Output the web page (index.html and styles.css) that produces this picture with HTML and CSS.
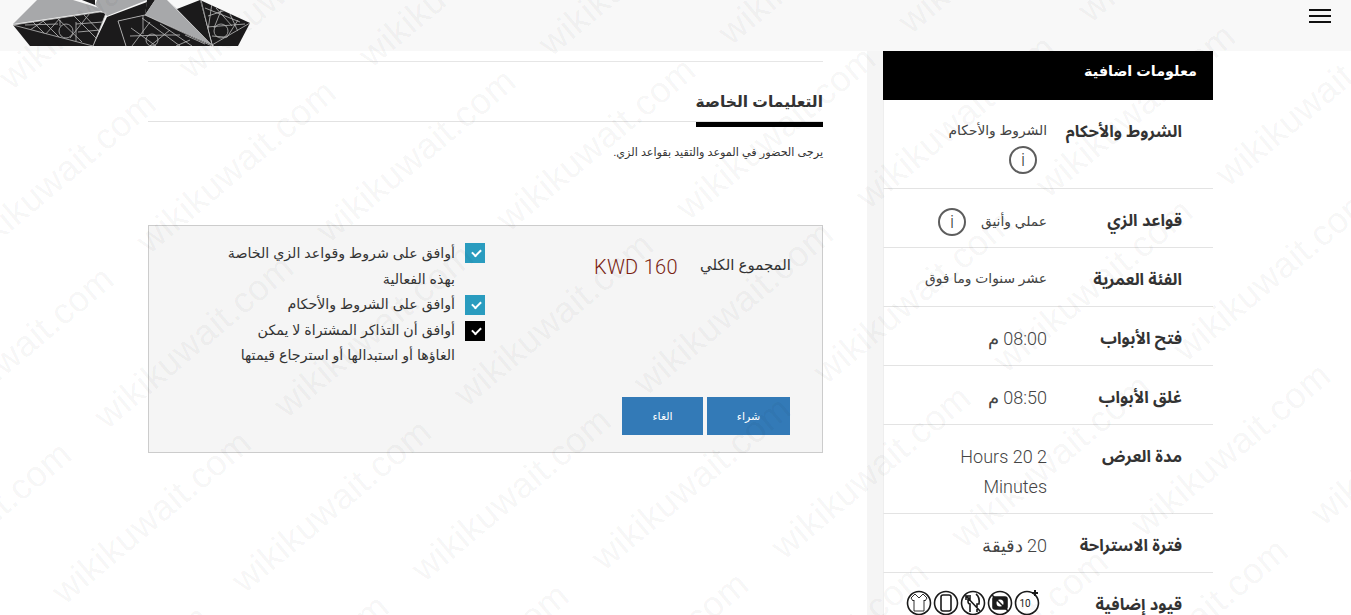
FILE: index.html
```html
<!DOCTYPE html>
<html lang="ar" dir="rtl">
<head>
<meta charset="utf-8">
<title>التعليمات الخاصة</title>
<link rel="stylesheet" href="styles.css">
</head>
<body>
<header class="top">
  <button class="burger" aria-label="menu"><span></span><span></span><span></span></button>
  <svg class="logo" width="252" height="47" viewBox="0 0 252 47">
    <defs>
      <clipPath id="patA"><polygon points="13,25 100,12 106,13 93,46"/></clipPath>
      <clipPath id="patB"><polygon points="118,21 145,15 212,46 126,46"/></clipPath>
      <clipPath id="patC"><polygon points="201,0 250,23 213,46"/></clipPath>
    </defs>
    <g fill="#1b1a1b">
      <polygon points="13,25 100,12 106,13 93,46 30,46"/>
      <polygon points="93,46 107,17 147,2 145,15 118,21 126,46"/>
      <polygon points="118,21 145,15 212,45 212,46 126,46"/>
      <polygon points="177,9 200,0 212,45 170,2"/>
      <polygon points="200,0 250,23 238,46 213,46"/>
      <polygon points="82,0 95,0 95,5"/>
      <polygon points="147,0 155,0 145,15"/>
    </g>
    <polygon points="13,24 37,0 73,0 106,10" fill="#a7a8aa"/>
    <polygon points="95,5 97,0 147,0 107,16" fill="#a7a8aa"/>
    <polygon points="145,15 155,0 167,0 212,45" fill="#a7a8aa"/>
    <g class="lines">
      <path d="M13,25 100,12 106,13 93,46 13,25"/>
      <path d="M118,21 145,15 212,46M118,21 126,46"/>
      <path d="M201,0 212,45 250,23M212,45 214,46"/>
      <g clip-path="url(#patA)">
        <circle cx="66" cy="31" r="7"/>
        <path d="M30,19 45,34M40,18 60,38M55,16 82,42M72,14 96,38M90,13 70,38M62,16 44,36M48,18 30,30M84,15 100,32M25,25 58,24M76,24 103,22M78,32 100,30M60,20 60,26M76,22 76,41"/>
      </g>
      <g clip-path="url(#patB)">
        <circle cx="152" cy="40" r="6"/>
        <path d="M131,28 156,46M142,18 180,46M160,24 192,46M150,22 132,46M170,30 150,46M190,40 176,46M143,16 143,34M130,36 165,35M165,35 180,35M185,35 205,44"/>
      </g>
      <g clip-path="url(#patC)">
        <circle cx="221" cy="31" r="7"/>
        <path d="M205,8 240,22M212,3 208,30M222,8 214,28M230,14 240,36M207,27 245,24M208,16 232,8M216,8 232,26M238,20 224,42M212,36 236,38"/>
      </g>
    </g>
  </svg>
</header>

<div class="page">
  <aside class="side">
    <h3 class="side-title">معلومات اضافية</h3>
    <dl class="facts">
      <div class="fact fact-terms">
        <dt>الشروط والأحكام</dt>
        <dd class="small">الشروط والأحكام<br><i class="info info-block">i</i></dd>
      </div>
      <div class="fact">
        <dt>قواعد الزي</dt>
        <dd class="small">عملي وأنيق <i class="info info-inline">i</i></dd>
      </div>
      <div class="fact"><dt>الفئة العمرية</dt><dd class="small">عشر سنوات وما فوق</dd></div>
      <div class="fact"><dt>فتح الأبواب</dt><dd>08:00 م</dd></div>
      <div class="fact"><dt>غلق الأبواب</dt><dd>08:50 م</dd></div>
      <div class="fact fact-tall"><dt>مدة العرض</dt><dd>2 Hours 20 Minutes</dd></div>
      <div class="fact"><dt>فترة الاستراحة</dt><dd>20 دقيقة</dd></div>
      <div class="fact fact-last">
        <dt>قيود إضافية</dt>
        <dd class="rules">
          <svg class="rule" viewBox="0 0 26 26"><circle cx="13" cy="13" r="11.5"/><text x="11" y="17" text-anchor="middle" class="ten">10</text><path class="plus" d="M21 0v6M18 3h6"/></svg>
          <svg class="rule" viewBox="0 0 26 26"><circle cx="13" cy="13" r="11.5"/><rect class="solid" x="6" y="7" width="14" height="12" rx="2"/><circle class="hole" cx="13" cy="13" r="3.5"/><path d="M5 5 21 21"/></svg>
          <svg class="rule" viewBox="0 0 26 26"><circle cx="13" cy="13" r="11.5"/><path d="M8 5v6q0 3 2 3v8M6 5v5M10 5v5M16 4q4 3 3 10h-2v8M6 6 20 21"/></svg>
          <svg class="rule" viewBox="0 0 26 26"><circle cx="13" cy="13" r="11.5"/><rect x="8" y="5" width="10" height="16" rx="2"/></svg>
          <svg class="rule" viewBox="0 0 26 26"><circle cx="13" cy="13" r="11.5"/><path class="thin" d="M9 4 5 8 7 11 8 10V21H18V10L19 11 21 8 17 4 13 8Z"/></svg>
        </dd>
      </div>
    </dl>
  </aside>

  <main class="main">
    <div class="rule-top"></div>
    <div class="tab-line"><h3 class="tab">التعليمات الخاصة</h3></div>
    <p class="note">يرجى الحضور في الموعد والتقيد بقواعد الزي.</p>

    <section class="box">
      <div class="box-body">
        <div class="total">
          <span class="total-label">المجموع الكلي</span>
          <span class="total-price" dir="ltr">KWD 160</span>
        </div>
        <ul class="checks">
          <li><span class="tick"></span><span class="check-text">أوافق على شروط وقواعد الزي الخاصة بهذه الفعالية</span></li>
          <li><span class="tick"></span><span class="check-text">أوافق على الشروط والأحكام</span></li>
          <li><span class="tick tick-dark"></span><span class="check-text">أوافق أن التذاكر المشتراة لا يمكن الغاؤها أو استبدالها أو استرجاع قيمتها</span></li>
        </ul>
      </div>
      <div class="actions">
        <button class="btn btn-buy">شراء</button>
        <button class="btn btn-cancel">الغاء</button>
      </div>
    </section>
  </main>
</div>

<div class="marks" aria-hidden="true">
  <div class="marks-inner">
    <div class="mark-row"><span>wikikuwait.com</span><span>wikikuwait.com</span><span>wikikuwait.com</span><span>wikikuwait.com</span><span>wikikuwait.com</span><span>wikikuwait.com</span></div>
    <div class="mark-row"><span>wikikuwait.com</span><span>wikikuwait.com</span><span>wikikuwait.com</span><span>wikikuwait.com</span><span>wikikuwait.com</span><span>wikikuwait.com</span></div>
    <div class="mark-row"><span>wikikuwait.com</span><span>wikikuwait.com</span><span>wikikuwait.com</span><span>wikikuwait.com</span><span>wikikuwait.com</span><span>wikikuwait.com</span></div>
    <div class="mark-row"><span>wikikuwait.com</span><span>wikikuwait.com</span><span>wikikuwait.com</span><span>wikikuwait.com</span><span>wikikuwait.com</span><span>wikikuwait.com</span></div>
    <div class="mark-row"><span>wikikuwait.com</span><span>wikikuwait.com</span><span>wikikuwait.com</span><span>wikikuwait.com</span><span>wikikuwait.com</span><span>wikikuwait.com</span></div>
    <div class="mark-row"><span>wikikuwait.com</span><span>wikikuwait.com</span><span>wikikuwait.com</span><span>wikikuwait.com</span><span>wikikuwait.com</span><span>wikikuwait.com</span></div>
    <div class="mark-row"><span>wikikuwait.com</span><span>wikikuwait.com</span><span>wikikuwait.com</span><span>wikikuwait.com</span><span>wikikuwait.com</span><span>wikikuwait.com</span></div>
    <div class="mark-row"><span>wikikuwait.com</span><span>wikikuwait.com</span><span>wikikuwait.com</span><span>wikikuwait.com</span><span>wikikuwait.com</span><span>wikikuwait.com</span></div>
    <div class="mark-row"><span>wikikuwait.com</span><span>wikikuwait.com</span><span>wikikuwait.com</span><span>wikikuwait.com</span><span>wikikuwait.com</span><span>wikikuwait.com</span></div>
    <div class="mark-row"><span>wikikuwait.com</span><span>wikikuwait.com</span><span>wikikuwait.com</span><span>wikikuwait.com</span><span>wikikuwait.com</span><span>wikikuwait.com</span></div>
    <div class="mark-row"><span>wikikuwait.com</span><span>wikikuwait.com</span><span>wikikuwait.com</span><span>wikikuwait.com</span><span>wikikuwait.com</span><span>wikikuwait.com</span></div>
    <div class="mark-row"><span>wikikuwait.com</span><span>wikikuwait.com</span><span>wikikuwait.com</span><span>wikikuwait.com</span><span>wikikuwait.com</span><span>wikikuwait.com</span></div>
    <div class="mark-row"><span>wikikuwait.com</span><span>wikikuwait.com</span><span>wikikuwait.com</span><span>wikikuwait.com</span><span>wikikuwait.com</span><span>wikikuwait.com</span></div>
    <div class="mark-row"><span>wikikuwait.com</span><span>wikikuwait.com</span><span>wikikuwait.com</span><span>wikikuwait.com</span><span>wikikuwait.com</span><span>wikikuwait.com</span></div>
  </div>
</div>
</body>
</html>
```

FILE: styles.css
```css
* { box-sizing: border-box; }
html, body { margin: 0; height: 615px; overflow: hidden; }
body {
  position: relative;
  background: #fff;
  color: #333;
  font-family: "Liberation Sans", "DejaVu Sans", sans-serif;
  font-size: 14px;
}

.top {
  height: 51px;
  background: #f8f8f8;
  display: flex;
  justify-content: space-between;
  align-items: flex-start;
  direction: rtl;
  padding: 0 20px 0 0;
}
.logo { display: block; }
.lines { fill: none; stroke: #bdbdbd; stroke-width: .8; }
.burger {
  width: 22px;
  background: none;
  border: 0;
  padding: 0;
  margin-top: 9px;
  display: flex;
  flex-direction: column;
  gap: 4px;
}
.burger span { display: block; width: 22px; height: 2px; background: #111; }

.page {
  display: flex;
  direction: rtl;
  padding-right: 138px;
}
.side { width: 330px; flex: none; }
.side-title {
  margin: 0;
  height: 49px;
  background: #000;
  color: #fff;
  font-size: 14.4px;
  font-weight: bold;
  padding: 12px 16px 0 0;
}
.facts { margin: 0; }
.fact {
  display: flex;
  height: 59px;
  border-bottom: 1px solid #e3e3e3;
  padding: 23px 31px 0 0;
  border-left: 1px solid #eee;
}
.fact-terms { height: 89px; }
.fact-tall { height: 89px; }
.fact-last { border-bottom: 0; height: 43px; }
.fact dt {
  width: 135px;
  flex: none;
  margin-top: -3px;
  font-size: 16.5px;
  line-height: 24px;
  font-weight: bold;
  color: #333;
  font-family: "Noto Sans Arabic", "DejaVu Sans", sans-serif;
}
.fact dd {
  margin: 0;
  font-family: "Roboto", "Liberation Sans", "DejaVu Sans", sans-serif;
  font-size: 18px;
  font-weight: 300;
  line-height: 30px;
  margin-top: -6px;
  color: #444;
  width: 105px;
}
.fact dd.small {
  font-size: 13.8px;
  font-family: "Liberation Sans", "DejaVu Sans", sans-serif;
  line-height: 24px;
  font-weight: normal;
  width: auto;
  max-width: 135px;
  margin-top: -4px;
}
.info {
  display: inline-flex;
  width: 28px;
  height: 28px;
  border: 2px solid #555;
  border-radius: 50%;
  align-items: center;
  justify-content: center;
  font-style: normal;
  font-size: 18px;
  font-family: "Roboto", sans-serif;
  font-weight: 300;
  vertical-align: middle;
  color: #333;
  opacity: .95;
}
.info-block { margin: 3px 10px 0 0; }
.info-inline { margin-right: 11px; }
.fact dd.rules {
  display: flex;
  gap: 1px;
  width: auto;
  margin-top: -6px;
  margin-right: 7px;
}
.rule { width: 26px; height: 26px; fill: none; stroke: #1a1a1a; stroke-width: 1.6; }
.rule .solid { fill: #1a1a1a; }
.rule .hole { fill: #fff; stroke: none; }
.rule .thin { stroke-width: .9; }
.rule .ten { font: 10px "Roboto", sans-serif; fill: #1a1a1a; stroke: none; direction: ltr; }
.rule .plus { stroke-width: 2; }

.main {
  width: 675px;
  margin-right: 60px;
  flex: none;
  position: relative;
}
.main::before {
  content: "";
  position: absolute;
  top: 0;
  height: 564px;
  left: 719px;
  width: 16px;
  background: #f5f5f5;
}
.rule-top { height: 11px; border-bottom: 1px solid #e6e6e6; }
.tab-line { height: 60px; border-bottom: 1px solid #e2e2e2; display: flex; }
.tab {
  margin: 0;
  padding-top: 31px;
  height: 65px;
  width: 127px;
  font-size: 15.5px;
  font-weight: bold;
  color: #333;
  white-space: nowrap;
  border-bottom: 5px solid #000;
}
.note { margin: 24px 0 0; font-size: 11.2px; height: 79px; color: #333; }

.box {
  height: 228px;
  background: #f5f5f5;
  border: 1px solid #ccc;
  display: flex;
  flex-direction: column;
  justify-content: space-between;
}
.box-body { display: flex; padding: 17px 31px 0 0; }
.total { width: 306px; display: flex; flex: none; gap: 22px; font-size: 15px; padding-top: 13px; }
.total-price { font-family: "Roboto", sans-serif; font-weight: 300; font-size: 20px; letter-spacing: .3px; color: #7a1f12; line-height: 23px; }
.checks { list-style: none; margin: 0; padding: 0; width: 260px; font-size: 14.2px; line-height: 25.5px; }
.checks li { display: flex; gap: 10px; align-items: flex-start; }
.checks li + li .tick { margin-top: 1px; }
.check-text { margin: -2px 0 2px; }
.tick {
  flex: none;
  width: 20px;
  height: 20px;
  background: #2a9cbf;
  position: relative;
}
.tick::after {
  content: "";
  position: absolute;
  left: 7px;
  top: 6px;
  width: 7px;
  height: 4px;
  border-left: 2px solid #fff;
  border-bottom: 2px solid #fff;
  transform: rotate(-45deg);
}
.tick-dark { background: #000; }
.actions { display: flex; gap: 4px; padding: 0 32px 17px 0; }
.btn {
  height: 38px;
  border: 0;
  background: #337ab7;
  color: #fff;
  font: 11px "Liberation Sans", "DejaVu Sans", sans-serif;
  padding: 0;
}
.btn-buy { width: 83px; }
.btn-cancel { width: 81px; }

.marks {
  position: absolute;
  left: 168px;
  top: 503px;
  width: 0;
  height: 0;
  transform-origin: 0 0;
  transform: rotate(-40deg);
  pointer-events: none;
  direction: ltr;
}
.marks-inner {
  position: absolute;
  top: -555px;
  left: -580px;
  width: 2000px;
}
.mark-row {
  display: flex;
  height: 107px;
  font: 36px/40px "Liberation Sans", sans-serif;
  letter-spacing: .5px;
  color: rgba(0, 0, 0, 0.05);
  white-space: nowrap;
}
.mark-row span { flex: none; width: 290px; }
.mark-row:nth-child(even) { margin-left: 145px; }
```
